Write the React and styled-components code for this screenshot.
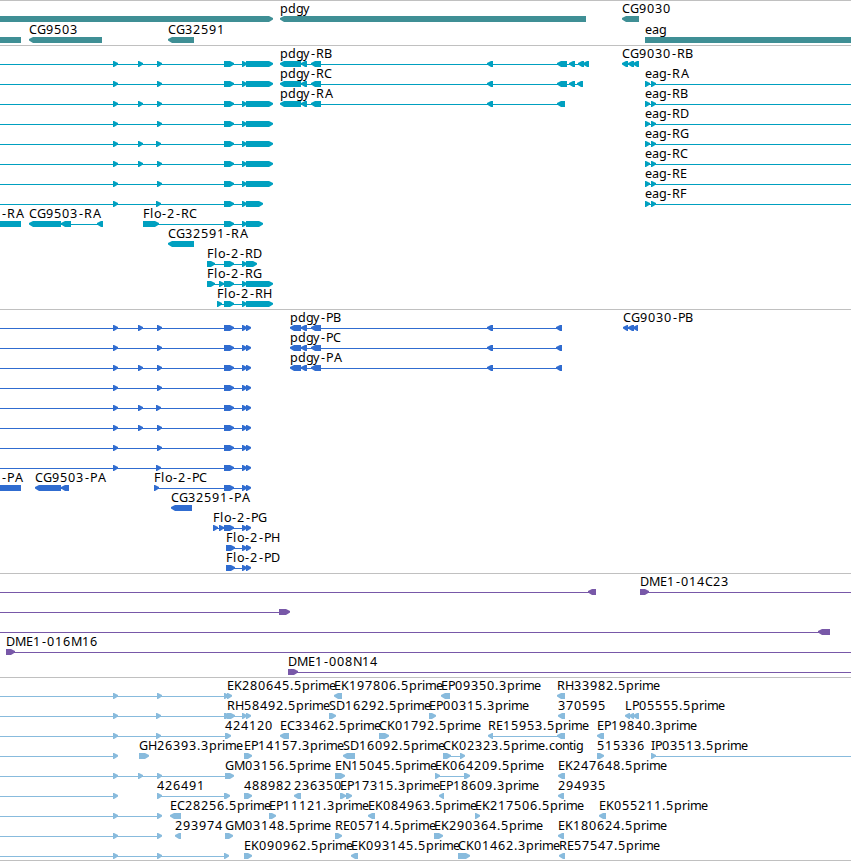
import styled, { createGlobalStyle } from "styled-components"

const GlobalStyle = createGlobalStyle`
  body {
    margin: 0;
    background-color: #FFFFFF;
    overflow: hidden;
  }
`

const Browser = styled.main`
  display: flex;
  flex-direction: column;
  width: 851px;
  border-bottom: 1px solid #C0C0C0;
`

const Track = styled.section`
  display: flex;
  flex-direction: column;
  border-top: 1px solid #C0C0C0;
  padding-top: 1px;
  padding-bottom: ${({ $gap }) => $gap}px;
  color: ${({ $color }) => $color};
`

const Row = styled.svg`
  display: block;
  width: 851px;
  height: ${({ $height }) => $height}px;
  overflow: visible;
`

const Shape = styled.path`
  fill: currentColor;
`

const Label = styled.text`
  fill: #000000;
  font-family: "Noto Sans", "Open Sans", sans-serif;
  font-size: 12.6px;
`

// whole pixel advance of every letter used in the labels
const ADVANCE = {
  A: 9, B: 7, C: 8, D: 9, E: 7, F: 7, G: 9, H: 9, I: 4, K: 8, L: 7, M: 11, N: 9, P: 7, R: 8, S: 7,
  a: 7, c: 6, d: 8, e: 7, g: 7, i: 3, l: 4, m: 11, n: 7, o: 7, p: 8, r: 5, t: 4, y: 7,
  "-": 6, ".": 4,
}

function letterPositions(text, start){
  let x = start
  return text.split("").map((letter) => {
    const current = x
    x += ADVANCE[letter] || 8
    return letter === "-" || letter === "A" ? current + 1 : current
  }).join(" ")
}

const END = 860

// [label, strand, blocks, left end of the line, right end of the line]
const flo = (tail, ...exons) => ["", "+", [...exons.map((x) => [x, x + 5]), ...tail], -9]

const longTail = [[224, 234], [242, 247], [246, 273]]
const shortTail = [[224, 234], [242, 247], [246, 263]]
const codingTail = [[224, 234], [242, 247], [246, 251]]

const eag = (label) => [label, "+", [[645, 650], [651, 656]], 645, END]
const pdgyR = (label, ...rest) => [label, "-", [[280, 301], [301, 307], [311, 321], [487, 493], ...rest]]
const pdgyP = (label) => [label, "-", [[290, 301], [301, 307], [311, 321], [487, 493], [556, 562]]]
const est = (label, strand, ...blocks) => [label, strand, blocks]
const plain = (...exons) => flo([], ...exons)

const genes = [
  [
    ["", "+", [[-9, 273]]],
    est("pdgy", "-", [280, 586]),
    est("CG9030", "-", [622, 639]),
  ],
  [
    ["", "", [[-9, 21]]],
    est("CG9503", "-", [29, 102]),
    est("CG32591", "-", [168, 194]),
    est("eag", "", [645, END]),
  ],
]

const transcripts = [
  [
    flo(longTail, 113, 138, 157),
    pdgyR("pdgy-RB", [557, 567], [569, 575], [578, 584], [583, 589]),
    est("CG9030-RB", "-", [622, 628], [628, 634], [633, 639]),
  ],
  [flo(longTail, 113, 157), pdgyR("pdgy-RC", [557, 567], [569, 575], [577, 583]), eag("eag-RA")],
  [flo(longTail, 113, 138, 157), pdgyR("pdgy-RA", [557, 565]), eag("eag-RB")],
  [flo(longTail, 113, 157), eag("eag-RD")],
  [flo(longTail, 113, 138, 156), eag("eag-RG")],
  [flo(longTail, 113, 138, 157), eag("eag-RC")],
  [flo(longTail, 113, 157), eag("eag-RE")],
  [flo(shortTail, 113, 156), eag("eag-RF")],
  [
    ["", "", [[-9, 2]]],
    est("-RA", "", [1, 21]),
    est("CG9503-RA", "-", [29, 61], [61, 71], [97, 103]),
    est("Flo-2-RC", "+", [143, 159], ...shortTail),
  ],
  [est("CG32591-RA", "-", [168, 194])],
  [est("Flo-2-RD", "+", [207, 215], [224, 234], [242, 247], [246, 257])],
  [est("Flo-2-RG", "+", [207, 215], [219, 224], ...longTail)],
  [est("Flo-2-RH", "+", [217, 222], ...longTail)],
]

const proteins = [
  [
    flo(codingTail, 113, 138, 157),
    pdgyP("pdgy-PB"),
    est("CG9030-PB", "-", [623, 628], [628, 634], [633, 638]),
  ],
  [flo(codingTail, 113, 157), pdgyP("pdgy-PC")],
  [flo(codingTail, 113, 138, 157), pdgyP("pdgy-PA")],
  [flo(codingTail, 113, 157)],
  [flo(codingTail, 113, 138, 156)],
  [flo(codingTail, 113, 138, 157)],
  [flo(codingTail, 113, 157)],
  [flo(codingTail, 113, 156)],
  [
    ["", "", [[-9, 2]]],
    est("-PA", "", [1, 21]),
    est("CG9503-PA", "-", [35, 61], [61, 69]),
    est("Flo-2-PC", "+", [154, 159], ...codingTail),
  ],
  [est("CG32591-PA", "-", [171, 192])],
  [est("Flo-2-PG", "+", [213, 218], [219, 224], ...codingTail)],
  [est("Flo-2-PH", "+", [226, 235], [242, 247], [246, 251])],
  [est("Flo-2-PD", "+", [226, 235], [242, 247], [246, 251])],
]

const clones = [
  [["", "-", [[588, 596]], -9], ["DME1-014C23", "+", [[640, 649]], 640, END]],
  [["", "+", [[279, 290]], -9]],
  [["", "-", [[818, 830]], -9]],
  [["DME1-016M16", "+", [[6, 15]], 6, END]],
  [["DME1-008N14", "+", [[288, 298]], 288, END]],
]

const ests = [
  [
    flo([[224, 229]], 113, 157),
    est("EK280645.5prime", "+", [227, 232]),
    est("EK197806.5prime", "-", [334, 342]),
    est("EP09350.3prime", "-", [441, 450]),
    est("RH33982.5prime", "-", [557, 565]),
  ],
  [
    flo([[224, 230]], 113, 156),
    est("RH58492.5prime", "+", [227, 235], [242, 247], [246, 251]),
    est("SD16292.5prime", "+", [329, 336]),
    est("EP00315.3prime", "+", [429, 436]),
    est("370595", "-", [558, 565]),
    est("LP05555.5prime", "-", [625, 630], [629, 634], [633, 639]),
  ],
  [
    plain(113, 156),
    ["424120", "+", [[225, 231]], 160],
    est("EC33462.5prime", "-", [280, 289]),
    est("CK01792.5prime", "+", [379, 389]),
    est("RE15953.5prime", "-", [488, 493], [557, 565]),
    est("EP19840.3prime", "-", [597, 604]),
  ],
  [
    plain(113),
    est("GH26393.3prime", "+", [139, 149]),
    est("EP14157.3prime", "+", [244, 252]),
    est("SD16092.5prime", "-", [343, 355]),
    est("CK02323.5prime.contig", "+", [443, 451], [460, 465]),
    est("515336", "+", [597, 604]),
    ["IP03513.5prime", "+", [[651, 656]], 651, END],
  ],
  [
    plain(113, 138, 157),
    ["GM03156.5prime", "+", [[225, 234]], 160],
    est("EN15045.5prime", "+", [335, 345]),
    est("EK064209.5prime", "+", [435, 440], [464, 470]),
    est("EK247648.5prime", "-", [558, 565]),
  ],
  [
    plain(113),
    est("426491", "+", [157, 162], [224, 230]),
    est("488982", "+", [244, 252]),
    est("236350", "-", [294, 301]),
    est("EP17315.3prime", "+", [340, 346], [346, 352]),
    est("EP18609.3prime", "-", [439, 444]),
    est("294935", "-", [558, 564]),
  ],
  [
    plain(113, 157),
    est("EC28256.5prime", "-", [170, 181]),
    est("EP11121.3prime", "+", [269, 276]),
    est("EK084963.5prime", "-", [368, 375]),
    est("EK217506.5prime", "+", [475, 480]),
    est("EK055211.5prime", "-", [599, 606]),
  ],
  [
    plain(113, 157),
    est("293974", "-", [175, 181]),
    est("GM03148.5prime", "+", [225, 233]),
    est("RE05714.5prime", "+", [335, 342]),
    est("EK290364.5prime", "+", [434, 443]),
    est("EK180624.5prime", "-", [558, 564]),
  ],
  [
    plain(113, 157, 224),
    est("EK090962.5prime", "+", [244, 252]),
    est("EK093145.5prime", "-", [351, 358]),
    est("CK01462.3prime", "+", [458, 470]),
    est("RE57547.5prime", "-", [559, 565]),
  ],
]

const tracks = [
  { name: "genes", color: "#3F8F95", rows: genes, height: 21, gap: 1 },
  { name: "transcripts", color: "#00A0C0", rows: transcripts, height: 20, gap: 2 },
  { name: "proteins", color: "#306CD0", rows: proteins, height: 20, gap: 2 },
  { name: "clones", color: "#7858A8", rows: clones, height: 20, gap: 2 },
  { name: "ests", color: "#88BBDD", rows: ests, height: 20, gap: 1 },
]

// a block is 6px high, its pointed end is 5px long
function blockPath(strand, [from, to]){
  if (strand === "+") {
    return `M${from} 14H${to - 4}L${to} 16V17.5L${to - 4} 20H${from}Z`
  }
  if (strand === "-") {
    return `M${to} 14H${from + 4}L${from} 16V17.5L${from + 4} 20H${to}Z`
  }
  return `M${from} 14H${to}V20H${from}Z`
}

function Feature({ label, strand, blocks, start, end }){
  const hasLine = blocks.length > 1 || start !== undefined
  const from = start ?? blocks[0][0] + 3
  const to = (end ?? blocks[blocks.length - 1][1]) - 3
  return(
    <g>
      {hasLine && <Shape d={`M${from} 17H${to}V18H${from}Z`}/>}
      {blocks.map((block) => (
        <Shape key={block[0]} d={blockPath(strand, block)}/>
      ))}
      {label && <Label x={letterPositions(label, blocks[0][0])} y={11}>{label}</Label>}
    </g>
  )
}

function App(){
  return(
    <>
      <GlobalStyle/>
      <Browser>
        {tracks.map(({ name, color, rows, height, gap }) => (
          <Track key={name} $color={color} $gap={gap}>
            {rows.map((features, index) => (
              <Row key={index} $height={height}>
                {features.map(([label, strand, blocks, start, end]) => (
                  <Feature
                    key={blocks[0][0]}
                    label={label}
                    strand={strand}
                    blocks={blocks}
                    start={start}
                    end={end}
                  />
                ))}
              </Row>
            ))}
          </Track>
        ))}
      </Browser>
    </>
  )
}

export default App
